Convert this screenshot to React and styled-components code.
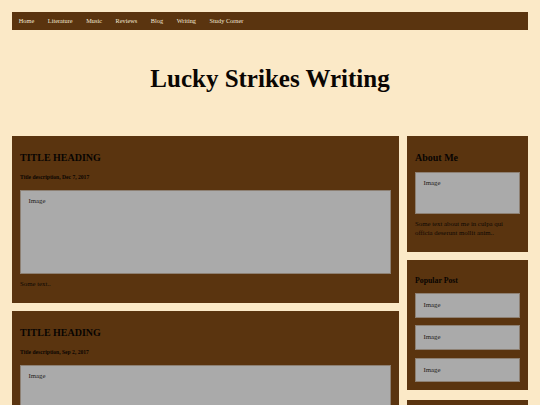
import React from "react";
import styled, { createGlobalStyle } from "styled-components";

const GlobalStyle = createGlobalStyle`
  html, body {
    margin: 0;
    padding: 0;
    background-color: #fbe9c7;
    font-family: "Liberation Serif", "Times New Roman", serif;
    color: #000;
  }
  body {
    padding: 12px 12px 0;
    overflow: hidden;
  }
`;

const Nav = styled.nav`
  height: 18px;
  background-color: #5a340f;
  display: flex;
  flex-direction: row;
  align-items: center;
`;

const NavLink = styled.a`
  color: #f3e8d4;
  font-size: 6.3px;
  line-height: 18px;
  padding: 0 6.8px;
  text-decoration: none;
  white-space: nowrap;
`;

const Header = styled.header`
  text-align: center;
`;

const SiteTitle = styled.h1`
  margin: 34px 0 43px;
  font-size: 25px;
  line-height: 29px;
  font-weight: bold;
  color: #0a0603;
`;

const Columns = styled.div`
  display: grid;
  grid-template-columns: 387px 121px;
  column-gap: 8px;
  align-items: start;
`;

const Column = styled.div`
  display: flex;
  flex-direction: column;
  gap: 8px;
`;

const Card = styled.section`
  background-color: #5a340f;
  padding: 16px 8px 8px;
  display: flex;
  flex-direction: column;
`;

const FollowCard = styled(Card)`
  margin-top: 2px;
`;

const CardTitle = styled.h2`
  margin: 0;
  font-size: 10px;
  line-height: 12px;
  font-weight: bold;
  color: #080402;
`;

const SmallTitle = styled.h3`
  margin: 0;
  font-size: 7.8px;
  line-height: 10px;
  font-weight: bold;
  color: #080402;
`;

const Description = styled.h5`
  margin: 9.6px 0 9px;
  font-size: 5.6px;
  line-height: 7px;
  font-weight: bold;
  color: #0a0502;
`;

const FakeImage = styled.div`
  box-sizing: border-box;
  height: ${(p) => p.$h}px;
  margin-top: ${(p) => p.$top || 0}px;
  background-color: #aaaaaa;
  border: 1px solid #8d8073;
  padding: ${(p) => p.$pad || 6}px 7.5px;
  font-size: 6.8px;
  line-height: 8.5px;
  color: #1f1c19;
`;

const Text = styled.p`
  margin: ${(p) => p.$top || 6}px 0 7px;
  font-size: 6.8px;
  line-height: 8.6px;
  color: #0e0803;
`;

const PostList = styled.div`
  display: flex;
  flex-direction: column;
  gap: 7.7px;
  margin-top: 6.7px;
`;

const navItems = [
  "Home",
  "Literature",
  "Music",
  "Reviews",
  "Blog",
  "Writing",
  "Study Corner",
];

const posts = [
  { title: "TITLE HEADING", desc: "Title description, Dec 7, 2017" },
  { title: "TITLE HEADING", desc: "Title description, Sep 2, 2017" },
];

export default function App() {
  return (
    <>
      <GlobalStyle />
      <Nav>
        {navItems.map((item) => (
          <NavLink key={item} href="#">
            {item}
          </NavLink>
        ))}
      </Nav>
      <Header>
        <SiteTitle>Lucky Strikes Writing</SiteTitle>
      </Header>
      <Columns>
        <Column>
          {posts.map((post, i) => (
            <Card key={i}>
              <CardTitle>{post.title}</CardTitle>
              <Description>{post.desc}</Description>
              <FakeImage $h={84}>Image</FakeImage>
              <Text>Some text..</Text>
            </Card>
          ))}
        </Column>
        <Column>
          <Card>
            <CardTitle>About Me</CardTitle>
            <FakeImage $h={42} $top={8}>
              Image
            </FakeImage>
            <Text $top={6}>
              Some text about me in culpa qui officia deserunt mollit anim..
            </Text>
          </Card>
          <Card>
            <SmallTitle>Popular Post</SmallTitle>
            <PostList>
              <FakeImage $h={24.7} $pad={7}>
                Image
              </FakeImage>
              <FakeImage $h={24.7} $pad={7}>
                Image
              </FakeImage>
              <FakeImage $h={24.7} $pad={7}>
                Image
              </FakeImage>
            </PostList>
          </Card>
          <FollowCard>
            <SmallTitle>Follow Me</SmallTitle>
            <Text>Some text..</Text>
          </FollowCard>
        </Column>
      </Columns>
    </>
  );
}
